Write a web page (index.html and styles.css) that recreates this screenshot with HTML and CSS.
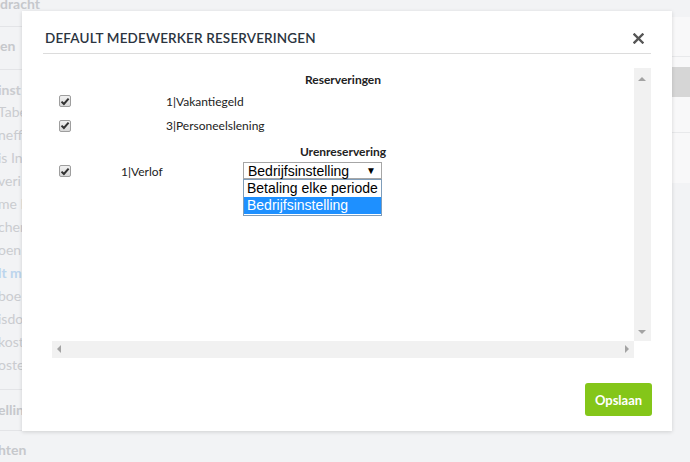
FILE: index.html
```html
<!DOCTYPE html>
<html>
<head>
<meta charset="utf-8">
<link rel="stylesheet" href="styles.css">
</head>
<body>
<div class="page">
  <aside class="sidebar">
    <div class="sb-item sb-head sb-first">dracht</div>
    <div class="sb-item sb-head sb-sep">en</div>
    <div class="sb-group">
      <div class="sb-item sb-bold sb-top">inst</div>
      <div class="sb-item">Tabel</div>
      <div class="sb-item">neffi</div>
      <div class="sb-item">is Ins</div>
      <div class="sb-item">veri</div>
      <div class="sb-item">me R</div>
      <div class="sb-item">chere</div>
      <div class="sb-item">oen</div>
      <div class="sb-item sb-active">lt m</div>
      <div class="sb-item">boe</div>
      <div class="sb-item">isdo</div>
      <div class="sb-item">koste</div>
      <div class="sb-item">oste</div>
    </div>
    <div class="sb-item sb-head sb-sep2">ellin</div>
    <div class="sb-item sb-head sb-sep3">hten</div>
  </aside>
  <main class="main">
    <div class="rpanel">
      <div class="rrow"></div>
      <div class="rrow rrow-btn"><span class="rbtn">oor</span></div>
      <div class="rrow rrow-last"></div>
    </div>
  </main>

  <div class="modal">
    <div class="modal-header">
      <h1 class="modal-title">DEFAULT MEDEWERKER RESERVERINGEN</h1>
      <span class="close">
        <svg width="11" height="11" viewBox="0 0 11 11"><path d="M1.5 1.5 L9.5 9.5 M9.5 1.5 L1.5 9.5" stroke="#555" stroke-width="2.4" stroke-linecap="square"/></svg>
      </span>
    </div>
    <div class="modal-body">
      <div class="scroller">
        <div class="content">
          <div class="sec-head sec1">Reserveringen</div>
          <div class="row row1">
            <span class="cb"><svg width="10" height="9" viewBox="0 0 10 9"><path d="M1.5 4.6 L3.9 7 L8.6 1.6" stroke="#333" stroke-width="2" fill="none"/></svg></span>
            <span class="lbl lbl-a">1|Vakantiegeld</span>
          </div>
          <div class="row">
            <span class="cb"><svg width="10" height="9" viewBox="0 0 10 9"><path d="M1.5 4.6 L3.9 7 L8.6 1.6" stroke="#333" stroke-width="2" fill="none"/></svg></span>
            <span class="lbl lbl-a">3|Personeelslening</span>
          </div>
          <div class="sec-head sec2">Urenreservering</div>
          <div class="row row3">
            <span class="cb"><svg width="10" height="9" viewBox="0 0 10 9"><path d="M1.5 4.6 L3.9 7 L8.6 1.6" stroke="#333" stroke-width="2" fill="none"/></svg></span>
            <span class="lbl lbl-b">1|Verlof</span>
            <div class="select-wrap">
              <div class="select"><span>Bedrijfsinstelling</span><span class="arrow">&#9660;</span></div>
              <div class="dropdown">
                <div class="opt">Betaling elke periode</div>
                <div class="opt opt-sel">Bedrijfsinstelling</div>
              </div>
            </div>
          </div>
        </div>
        <div class="vbar">
          <span class="tri tri-up"></span>
          <span class="tri tri-down"></span>
        </div>
        <div class="hbar">
          <span class="tri tri-left"></span>
          <span class="tri tri-right"></span>
        </div>
        <div class="corner"></div>
      </div>
    </div>
    <div class="modal-footer">
      <button class="btn-save">Opslaan</button>
    </div>
  </div>
</div>
</body>
</html>
```

FILE: styles.css
```css
* { box-sizing: border-box; }
html, body { margin: 0; padding: 0; }
body {
  background: #f2f3f5;
  font-family: Lato, "Open Sans", sans-serif;
  width: 690px;
  height: 462px;
  overflow: hidden;
}
.page {
  position: relative;
  width: 690px;
  height: 462px;
  display: flex;
}
.sidebar {
  width: 80px;
  flex: none;
  overflow: hidden;
  color: #caccd0;
  font-size: 14px;
}
.sb-item {
  white-space: nowrap;
  height: 23px;
  line-height: 23px;
  margin-left: -2px;
}
.sb-head { font-weight: 700; color: #c6c8cc; font-size: 14px; }
.sb-first { margin-top: -6px; line-height: 20px; border-bottom: 1px solid #e3e4e7; margin-left: 0; padding-bottom: 6px; height: 33px; }
.sb-sep { height: 43px; line-height: 38px; border-bottom: 1px solid #e3e4e7; margin-left: 0; }
.sb-group { padding-top: 9px; }
.sb-top { height: 21px; line-height: 21px; }
.sb-bold { font-weight: 700; }
.sb-active { color: #bcd5ed; font-weight: 700; }
.sb-sep2 { margin-top: 13px; border-top: 1px solid #e3e4e7; height: 42px; line-height: 40px; border-bottom: 1px solid #e3e4e7; }
.sb-sep3 { height: 40px; line-height: 38px; }

.main { flex: 1; position: relative; }
.rpanel {
  margin-top: 17px;
  margin-left: auto;
  width: 40px;
  background: #f8f8f9;
  height: 166px;
}
.rrow { height: 40px; border-bottom: 1px solid #e8e9eb; }
.rrow-btn { height: 76px; padding-top: 10px; }
.rbtn {
  display: block;
  height: 30px;
  background: #d6d6d6;
  color: #f4f4f4;
  font-size: 14px;
  line-height: 30px;
  text-indent: -3px;
  overflow: hidden;
}
.rrow-last { border-bottom: none; height: 50px; }

.modal {
  position: absolute;
  left: 22px;
  top: 11px;
  width: 650px;
  height: 420px;
  background: #fff;
  box-shadow: 0 1px 4px rgba(0,0,0,0.15);
  display: flex;
  flex-direction: column;
}
.modal-header {
  margin: 0 21px;
  height: 43px;
  border-bottom: 1px solid #dcdcdc;
  display: flex;
  align-items: center;
  justify-content: space-between;
  padding-top: 12px;
}
.modal-title {
  margin: 0 0 0 2px;
  font-size: 13.5px;
  font-weight: 600;
  color: #2b3440;
  letter-spacing: 0.15px;
}
.close { display: flex; margin-right: 7px; }

.modal-body {
  padding: 14px 21px 0 30px;
}
.scroller {
  position: relative;
  display: grid;
  grid-template-columns: 582px 17px;
  grid-template-rows: 273px 17px;
}
.content {
  position: relative;
  color: #222;
  font-size: 12px;
  padding-top: 2px;
}
.sec-head {
  font-weight: 700;
  text-align: center;
  height: 19px;
  line-height: 20px;
  font-size: 12px;
}
.sec2 { margin-top: 4px; height: 20px; }
.row {
  height: 25px;
  display: flex;
  align-items: center;
  position: relative;
}
.row1 { height: 24px; }
.row3 { height: 18px; }
.cb {
  width: 12px;
  height: 12px;
  margin-left: 7px;
  border: 1px solid #9e9e9e;
  border-radius: 2px;
  background: linear-gradient(#f0f0f0, #d8d8d8);
  display: flex;
  align-items: center;
  justify-content: center;
  flex: none;
}
.lbl { white-space: nowrap; }
.lbl-a { margin-left: 95px; }
.lbl-b { margin-left: 50px; }
.select-wrap {
  position: absolute;
  left: 191px;
  top: 0;
  width: 139px;
}
.select {
  height: 17px;
  border: 1px solid #a6a6a6;
  display: flex;
  justify-content: space-between;
  align-items: center;
  font-family: "Liberation Sans", Arial, sans-serif;
  font-size: 14px;
  padding: 0 5px 0 4px;
  color: #000;
  background: #fff;
}
.arrow { font-size: 10px; }
.dropdown {
  border: 1px solid #7f9db9;
  background: #fff;
  font-family: "Liberation Sans", Arial, sans-serif;
  font-size: 14px;
  color: #000;
}
.opt { height: 17px; line-height: 17px; padding-left: 3px; white-space: nowrap; }
.opt-sel { background: #1e90ff; color: #fff; margin-bottom: 1px; }

.vbar { background: #f1f1f1; position: relative; }
.hbar { background: #f1f1f1; position: relative; }
.corner { background: #fff; }
.tri { position: absolute; width: 0; height: 0; border: 4px solid transparent; }
.tri-up { border-bottom-color: #a3a3a3; border-top-width: 0; left: 4px; top: 9px; }
.tri-down { border-top-color: #a3a3a3; border-bottom-width: 0; left: 4px; bottom: 7px; }
.tri-left { border-right-color: #a3a3a3; border-left-width: 0; left: 5px; top: 4px; }
.tri-right { border-left-color: #a3a3a3; border-right-width: 0; right: 5px; top: 4px; }

.modal-footer {
  margin-top: auto;
  padding: 0 20px 15px 0;
  display: flex;
  justify-content: flex-end;
}
.btn-save {
  width: 67px;
  height: 33px;
  border: none;
  border-radius: 3px;
  background: #84c619;
  color: #fff;
  font-family: Lato, "Open Sans", sans-serif;
  font-size: 13px;
  font-weight: 700;
  padding: 0;
}
```
